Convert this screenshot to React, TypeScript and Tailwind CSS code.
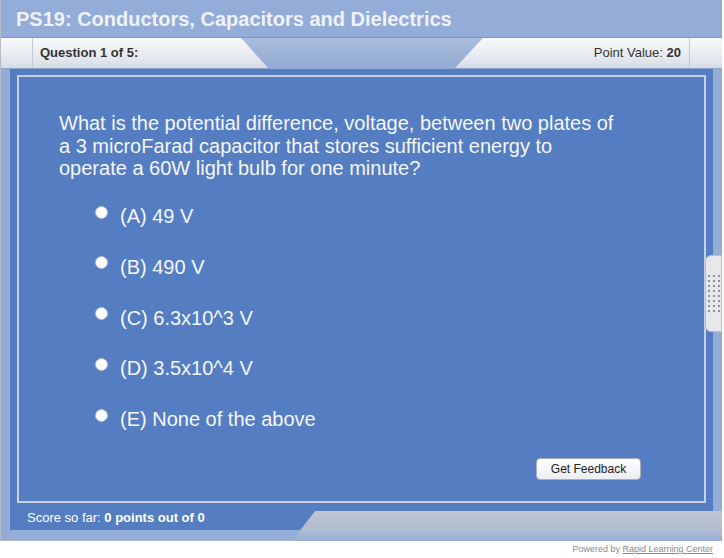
import React from "react";

const options = ["(A) 49 V", "(B) 490 V", "(C) 6.3x10^3 V", "(D) 3.5x10^4 V", "(E) None of the above"];

function HeaderNotch() {
  return (
    <svg className="absolute left-0 top-0 pointer-events-none" width="722" height="31" viewBox="0 0 722 31">
      <defs>
        <linearGradient id="notch" x1="0" y1="0" x2="0" y2="1">
          <stop offset="0" stopColor="#a9bcdc" />
          <stop offset="1" stopColor="#93aad3" />
        </linearGradient>
      </defs>
      <polygon points="240,0 482,0 453,31 268,31" fill="url(#notch)" />
    </svg>
  );
}

function SideHandle() {
  const rows = [0, 1, 2, 3, 4, 5, 6, 7];
  return (
    <div className="absolute left-[705px] top-[255px] w-[17px] h-[77px] bg-[#e6e8ec] border border-[#b9bec8] rounded-l-[6px] flex flex-col items-center justify-center gap-[3px]">
      {rows.map((r) => (
        <div key={r} className="flex gap-[3px]">
          <span className="w-[2px] h-[2px] bg-[#8a8f99]" />
          <span className="w-[2px] h-[2px] bg-[#8a8f99]" />
          <span className="w-[2px] h-[2px] bg-[#8a8f99]" />
        </div>
      ))}
    </div>
  );
}

function BottomTab() {
  return (
    <svg className="absolute left-0 top-[511px] pointer-events-none" width="722" height="30" viewBox="0 0 722 30">
      <defs>
        <linearGradient id="tab" x1="0" y1="0" x2="0" y2="1">
          <stop offset="0" stopColor="#bfc5d0" />
          <stop offset="0.6" stopColor="#b2bdd2" />
          <stop offset="1" stopColor="#98afd8" />
        </linearGradient>
      </defs>
      <polygon points="315,0 722,0 722,30 292,30" fill="url(#tab)" />
    </svg>
  );
}

export default function App() {
  return (
    <div className="relative w-[724px] h-[558px] bg-white font-['Liberation_Sans',Arial,sans-serif] overflow-hidden">
      <div className="w-[722px] h-[541px] bg-[#94acd8] border-l border-b border-[#b6bcc6] flex flex-col">
        {/* title */}
        <div className="h-[38px] flex items-center px-[15px] border-b border-[#7f97c2]">
          <h1 className="text-[20px] font-bold text-[#eef2fa]">PS19: Conductors, Capacitors and Dielectrics</h1>
        </div>

        {/* question header */}
        <div className="relative h-[31px] flex bg-gradient-to-b from-[#f8f9fb] via-[#eaedf3] to-[#d6dce7] border-b border-[#8ea3c8]">
          <HeaderNotch />
          <div className="w-[32px] border-r border-[#c3c9d3]" />
          <div className="relative flex-1 flex items-center justify-between pl-[7px] pr-[8px]">
            <span className="text-[13px] font-bold text-[#333]">Question 1 of 5:</span>
            <span className="text-[13px] text-[#333]">
              Point Value: <b>20</b>
            </span>
          </div>
          <div className="w-[33px] border-l border-[#c3c9d3]" />
        </div>

        {/* blue panel */}
        <div className="flex-1 flex flex-col ml-[9px] mr-[9px] bg-[#557dc2] pt-[6px] px-[7px]">
          <div className="h-[428px] border-2 border-[#c9d0de] flex flex-col px-[40px] pt-[35px]">
            <p className="text-[20px] leading-[22.5px] text-[#f4f6fb]">
              What is the potential difference, voltage, between two plates of
              <br />a 3 microFarad capacitor that stores sufficient energy to
              <br />operate a 60W light bulb for one minute?
            </p>
            <div className="flex flex-col gap-[29.75px] mt-[26px] ml-[36px]">
              {options.map((o) => (
                <label key={o} className="flex items-center gap-[12px] h-[21px] text-[20px] text-[#f4f6fb]">
                  <span className="w-[13px] h-[13px] rounded-full bg-white border border-[#b8bec8] -mt-[8px]" />
                  {o}
                </label>
              ))}
            </div>
            <div className="flex justify-end mt-[28px] mr-[23px]">
              <button className="w-[105px] h-[22px] rounded-[4px] border border-[#a9afb9] bg-gradient-to-b from-white to-[#eceef2] text-[12px] text-[#222]">
                Get Feedback
              </button>
            </div>
          </div>
          <div className="h-[27px] flex items-center pl-[10px] pt-[3px] text-[13px] text-white">
            Score so far:&nbsp;<b>0 points out of 0</b>
          </div>
        </div>
        <div className="h-[10px]" />
      </div>

      <BottomTab />
      <SideHandle />

      <div className="absolute right-[11px] top-[543px] text-[9px] text-[#8a8a8a]">
        Powered by <span className="underline">Rapid Learning Center</span>
      </div>
    </div>
  );
}
